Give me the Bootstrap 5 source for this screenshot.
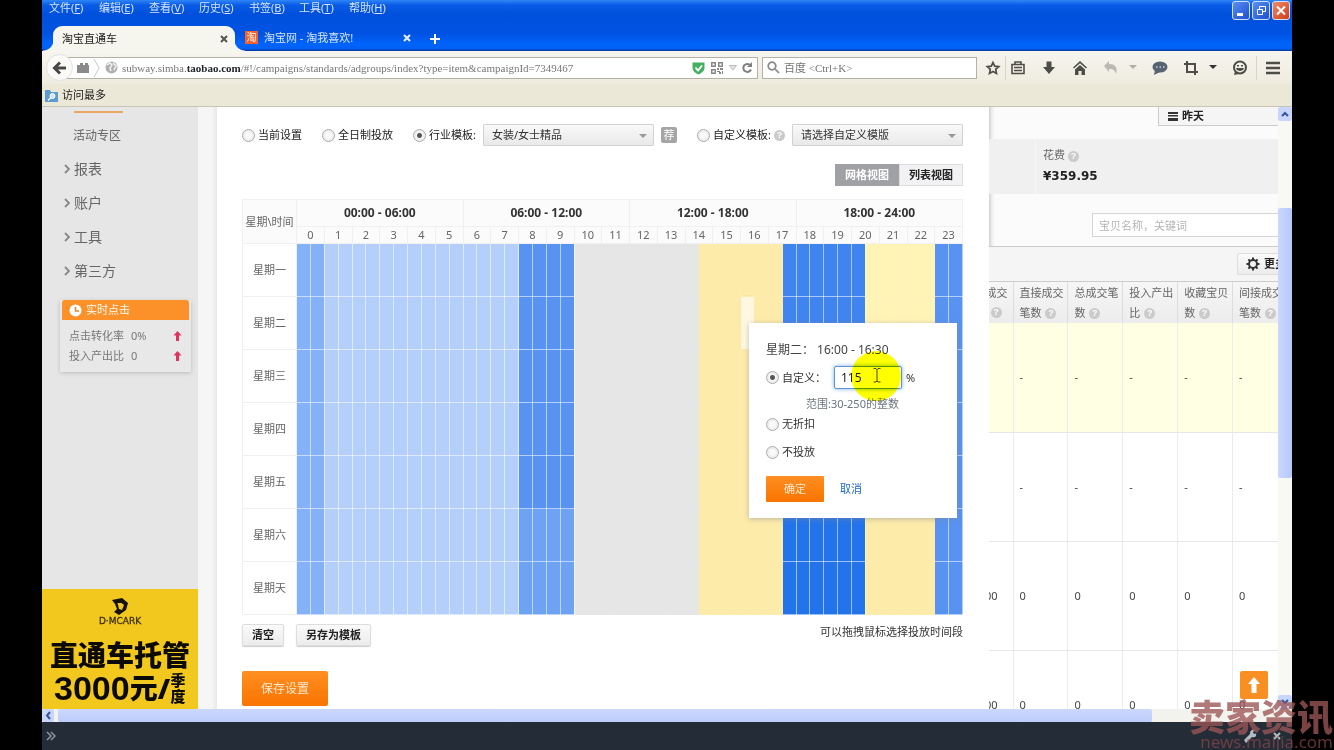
<!DOCTYPE html>
<html lang="zh-CN">
<head>
<meta charset="utf-8">
<meta name="viewport" content="width=device-width, initial-scale=1">
<title>淘宝直通车</title>
<link href="https://cdn.jsdelivr.net/npm/bootstrap@5.3.0/dist/css/bootstrap.min.css" rel="stylesheet">
<style>
:root{--ui:"Noto Sans","Noto Sans CJK SC",sans-serif;--song:"Liberation Serif","Noto Sans CJK SC",serif}
body{background:#000;font-family:var(--ui);font-size:11px;line-height:16px;color:#333}
a{color:inherit;text-decoration:none}
button{font-family:inherit}
svg{display:block;flex:none}
.desktop{height:100vh;padding:0 42px;overflow:hidden}
/* title bar, menus and tabs */
.titlebar{background:linear-gradient(#2f86f8 0,#0a5ce6 5px,#0050dc 14px,#0053e2 34px,#0064fb 44px,#0060f4 49px,#003fb0 50px);height:51px}
.menurow{height:26px;padding-right:2px}
.menus a{width:50px;color:#d5e4fb;white-space:nowrap}
.menus{padding-left:7px}
.wbtn{width:18px;height:19px;border:1px solid #cfe0fa;border-radius:3px;padding:0;margin-top:1px;background:linear-gradient(135deg,#5b8ff0,#1c4fd0);color:#fff}
.wbtn.x{background:linear-gradient(135deg,#ec8b68,#d23c14)}
.tabs{height:25px;padding-left:11px}
.tab1{position:relative;width:182px;height:26px;background:#f6f5ee;border-radius:9px 9px 0 0;padding:0 5px 0 9px;color:#222}
.tab1::before,.tab1::after{content:"";position:absolute;bottom:0;width:10px;height:12px}
.tab1::before{left:-10px;background:radial-gradient(circle at 0 0,transparent 10px,#f6f5ee 11px)}
.tab1::after{right:-10px;background:radial-gradient(circle at 100% 0,transparent 10px,#f6f5ee 11px)}
.tab2{width:176px;margin-left:10px;padding-bottom:2px;color:#d5e4fb}
.favi{width:13px;height:13px;background:#f0642c;color:#fff;font-size:10px;line-height:13px;text-align:center;margin-right:6px}
.plain{border:0;background:none;padding:0}
/* toolbar */
.tools{height:33px;background:linear-gradient(#f6f5ee,#efecdf);padding:0 11px 0 4px}
.back{width:27px;height:27px;border-radius:50%;border:1px solid #bdbab0;background:#fbfaf6;z-index:1;margin-right:-13px}
.field{height:22px;border:1px solid #b4b2a8;background:#fff;color:#777}
.addr{padding-left:16px}
.field input{border:0;outline:0;background:none;min-width:0;padding:0;font:11px/16px var(--song);color:#777}
.urltext{font:11px/16px var(--song);color:#777;white-space:nowrap}
.find{width:215px;margin-right:8px}
.bm{height:23px;background:#ebe8d8;border-bottom:1px solid #c8c5b5;color:#222;padding-left:3px}
.g1{margin-left:10px}.g2{margin-left:15px}
.vsep{width:1px;height:24px;background:#d8d5c8}
/* left column */
.side{width:156px;background:#e6e6e6;flex:none}
.side-nav{padding:4px 0 0 22px;color:#666}
.side-nav .cur{width:49px;height:2px;background:#e8a763;margin:0 0 3px 10px}
.side-nav a{display:flex;align-items:center;gap:3px;height:34px;font-size:14px}
.side-nav a.sub{padding:3px 0 0 9px;font-size:12px;height:36px}
.live{margin:12px 7px 0 18px;box-shadow:0 1px 4px #bbb;background:#e8e8e8;padding:0 2px 6px;color:#777}
.live h2{font-size:11px;line-height:20px;height:20px;background:#fb9128;color:#ffe9d0;margin:0 0 6px;padding-left:7px;border-radius:3px 3px 0 0}
.live div{height:20px;padding:0 7px}
.live .lab{width:62px}
.ad{height:120px;background:#f2c71e;color:#0c0a05;padding-top:9px}
.ad .brand{font:9px/12px "DejaVu Sans",sans-serif;color:#3c3208;-webkit-text-stroke:.3px}
.ad .l1{font-size:28px;line-height:32px;font-weight:900;margin-top:12px}
.ad .l2{font-size:28px;line-height:34px;font-weight:900;height:34px;white-space:nowrap}
.ad .n{font-family:"Liberation Sans",sans-serif;font-size:34px;font-weight:bold}
.ad .q{font-size:15px;line-height:16px;width:16px;white-space:normal}
.gut{width:19px;flex:none;background:linear-gradient(90deg,#f6f6f6 70%,#e9e9e9)}
/* schedule panel */
.dlg{background:#fff;padding:17px 26px 0 25px;min-width:0}
.opts{height:22px;gap:20px;white-space:nowrap;color:#222}
.pair{gap:7px}
.opts label,.pop label{display:flex;align-items:center;gap:3px}
.rad{appearance:none;width:13px;height:13px;margin:0;flex:none;border:1px solid #aaa;border-radius:50%;background:#fafafa;box-shadow:inset 0 0 0 2px #eee}
.rad:checked{background:radial-gradient(#555 2px,#fafafa 3px)}
.sel{appearance:none;width:171px;height:22px;border:1px solid #d2d2d2;border-radius:1px;font-size:11px;line-height:16px;color:#333;padding:0 20px 0 8px;background:linear-gradient(225deg,transparent 3px,#999 3px) calc(100% - 11px) 9px/0 0 no-repeat,linear-gradient(#f9f9f9,#e9e9e9)}
.selbox{position:relative}
.selbox::after{content:"";position:absolute;right:7px;top:10px;border:4px solid transparent;border-top-color:#999;border-bottom:0;pointer-events:none}
.rec{width:16px;height:16px;background:#a5a5a5;color:#fff;border-radius:2px;text-align:center;font-size:11px}
.q8{display:inline-block;width:11px;height:11px;border-radius:50%;background:#cbcbcb;color:#fff;font:bold 9px/11px "Liberation Sans",sans-serif;text-align:center;vertical-align:middle}
.views{margin-top:18px}
.vb{height:22px;width:64px;border:1px solid #ddd;background:#f2f2f4;font-size:11px;font-weight:bold;color:#222;padding:0}
.vb.on{background:#a0a1a5;border-color:#a0a1a5;color:#fff}
.sched{position:relative;margin-top:13px}
.grid{width:100%;table-layout:fixed;border-collapse:collapse;text-align:center;color:#666}
.grid th{font-weight:normal;background:#fbfbfb;border:1px solid #f0f0f0;padding:0;white-space:nowrap}
.grid thead .big{font-size:12px;font-weight:bold;color:#333;height:27px}
.grid thead .hr{height:17px;line-height:16px}
.grid tbody th{background:#fff}
.grid tbody tr{height:53px}
.grid td{padding:0;border:1px solid #ffffff8c}
.c0{background:#85b1f9}.c1{background:#b4cffa}.c2{background:#5893f1}.c3{background:#6ea3f4}
.grid .cg{background:#e6e6e6;border-color:#e7e7e7}.grid .cy{background:#fdebaa;border-color:#fdecae}.grid .cl{background:#fff4b6;border-color:#fff5bb}
.c5{background:#4084ef}.c6{background:#2374eb}.grid .pick{background:#fff7df;box-shadow:0 0 2px #caa}
.pop{position:absolute;top:124px;right:6px;width:208px;height:195px;background:#fff;box-shadow:0 1px 5px #8888;padding:19px 17px;color:#333}
.pop .tm{font-size:12px;color:#444}
.amt{width:68px;height:23px;border:1px solid #5c93d0;border-radius:2px;box-shadow:0 0 4px #7db2ef;padding:0 6px;font-size:12px;color:#222;outline:0}
.note{margin:7px 0 4px 40px}
.spot{position:absolute;left:102px;top:28px;width:50px;height:50px;border-radius:50%;background:#ff0;mix-blend-mode:multiply;pointer-events:none}
.beam{position:absolute;left:124px;top:45px}
.go{border:0;border-radius:1px;background:linear-gradient(#ff8f22,#f97400);color:#ffe9d0;font-size:11px;width:58px;height:26px;padding:0}
.save{width:86px;height:35px;font-size:12px;border-radius:2px;margin-top:25px}
.under{margin-top:9px;gap:12px}
.gb{height:22px;border:1px solid #ddd;border-radius:2px;background:linear-gradient(#fafafa,#ececec);font-size:11px;font-weight:bold;color:#222;padding:0 9px;box-shadow:0 1px 1px #ccc}
/* report behind */
.rep{position:relative;width:289px;flex:none;background:#fbfbfb;overflow:hidden;box-shadow:inset 5px 0 5px -4px #bbb;white-space:nowrap;color:#666}
.day{width:140px;height:19px;margin-left:169px;border:1px solid #ccc;border-top:0;background:#f5f5f5;font-size:11px;font-weight:bold;color:#222;text-align:left;padding:0 9px}
.stat{margin-top:13px;height:55px;background:#f0f0f0}
.stat .a{width:47px;border-right:1px solid #f7f7f7}
.stat .b{padding:8px 0 0 7px}
.cost{font:bold 12px/20px "DejaVu Sans",sans-serif;color:#222;margin-top:3px}
.kw{display:block;margin:19px 0 9px 103px;width:220px;height:24px;border:1px solid #d5d5d5;background:#fff;padding:0 6px;font-size:11px}
.kw::placeholder{color:#b5b5b5}
.bar{height:36px;background:#f5f5f5;border-top:1px solid #ccc;border-bottom:1px solid #ccc;padding:6px 0 0 248px}
.bar .gb{width:80px;text-align:left;box-shadow:none;padding:0 8px}
.rt{width:299px;table-layout:fixed;border-collapse:collapse}
.rt th{font-weight:normal;height:41px;line-height:20px;padding:0 0 0 6px;background:linear-gradient(#f6f6f6,#ececec);border-right:1px solid #ddd}
.rt th:first-child,.rt td:first-child{padding:0 5px 0 0;overflow:hidden}
.rt th:first-child div,.rt td:first-child div{display:flex;justify-content:flex-end;overflow:hidden}
.rt td{height:109px;padding:0 0 0 6px;border-right:1px solid #ececec;border-bottom:1px solid #e6e6e6;background:#fff;color:#444}
.rt td:first-child{padding-right:15px}
.rt .q8{margin:0 1px}
.rt th:first-child .q8{margin:4px 6px 5px 0}
.rt .hl td{background:#ffffe4}
.top{position:absolute;right:10px;bottom:10px;width:28px;height:28px;background:#f98f22;border-radius:2px}
.sv{width:14px;flex:none;background:#f8f8f5}
.sb{background:#c8d6fb;border-radius:2px;color:#34549c}
.thumbv{margin-top:87px;height:270px;background:linear-gradient(90deg,#cbd8fe,#b6c8fa)}
.sh{height:13px;background:#f3f3ee}
.thumbh{width:87.5%;background:linear-gradient(#cbd8fe,#bccdfb)}
.dock{height:28px;background:#232c37;padding:0 10px 0 4px;color:#8f979f}
.wm{position:absolute;right:1px;bottom:0;text-align:right;color:#9c5555c8}
.wm b{display:block;font-size:36px;line-height:30px;font-weight:900}
.wm span{display:block;font:17px/17px "Noto Sans",sans-serif;color:#8f4747b0}
</style>
</head>
<body>
<div class="desktop d-flex flex-column">
 <header class="titlebar flex-shrink-0">
  <div class="menurow d-flex justify-content-between">
   <nav class="menus d-flex"><a href="#">文件(<u>F</u>)</a><a href="#">编辑(<u>E</u>)</a><a href="#">查看(<u>V</u>)</a><a href="#">历史(<u>S</u>)</a><a href="#">书签(<u>B</u>)</a><a href="#">工具(<u>T</u>)</a><a href="#">帮助(<u>H</u>)</a></nav>
   <div class="d-flex align-items-start" style="gap:2px">
    <button class="wbtn" aria-label="最小化"><svg width="16" height="17"><path d="M4 12.500h6" stroke="#fff" stroke-width="3"/></svg></button>
    <button class="wbtn" aria-label="还原"><svg width="16" height="17" fill="none" stroke="#fff"><path d="M6.500 7V4.500h6v5H10M4.500 7.500h5v5h-5z"/></svg></button>
    <button class="wbtn x" aria-label="关闭"><svg width="16" height="17" stroke="#fff" stroke-width="2"><path d="M4 4.500l8 8M12 4.500l-8 8"/></svg></button>
   </div>
  </div>
  <div class="tabs d-flex align-items-center">
   <div class="tab1 d-flex align-items-center justify-content-between"><span>淘宝直通车</span><button class="plain" aria-label="关闭标签"><svg width="12" height="10" stroke="#555" stroke-width="2"><path d="M3 2l6 6M9 2l-6 6"/></svg></button></div>
   <div class="tab2 d-flex align-items-center"><span class="favi">淘</span><span>淘宝网 - 淘我喜欢!</span><button class="plain ms-auto me-2" aria-label="关闭标签"><svg width="12" height="10" stroke="#e8f0fd" stroke-width="2"><path d="M3 2l6 6M9 2l-6 6"/></svg></button></div>
   <button class="plain ms-2" aria-label="新建标签"><svg width="12" height="12" stroke="#fff" stroke-width="2"><path d="M6 1v10M1 6h10"/></svg></button>
  </div>
 </header>
 <div class="tools d-flex align-items-center flex-shrink-0">
  <button class="back plain border d-flex align-items-center justify-content-center" aria-label="后退"><svg width="15" height="14" fill="none" stroke="#484848" stroke-width="3"><path d="M8 1.500L2.500 7 8 12.500M3 7h11"/></svg></button>
  <div class="field addr d-flex align-items-center flex-grow-1 me-1">
   <svg width="24" height="18"><path d="M0 6h3V4h3v2h2V4h3v2h1v8H0z" fill="#8a8a8a"/><path d="M17 0l5 9-5 9" fill="none" stroke="#c8c8c8"/></svg>
   <svg class="ms-1" width="13" height="13"><circle cx="6.500" cy="6.500" r="6" fill="#b0b0b0"/><path d="M2 4l3-2 2 2-2 3 1 3M8 2l3 3-2 4" stroke="#f3f3f3" stroke-width="1.500" fill="none"/></svg>
   <span class="urltext flex-grow-1 ms-1">subway.simba.<b class="text-dark">taobao.com</b>/#!/campaigns/standards/adgroups/index?type=item&amp;campaignId=7349467</span>
   <svg width="13" height="14"><path d="M.5 1.500h12V7c0 3-3 5-6 6.500C3 12 .5 10 .5 7z" fill="#45b060"/><path d="M3.500 6.500l2.500 3 4-5" stroke="#fff" stroke-width="1.800" fill="none"/></svg>
   <svg style="margin-left:6px" width="12" height="12" fill="#888"><path d="M0 0h5v5H0zm1.500 1.500v2h2v-2zM7 0h5v5H7zm1.500 1.500v2h2v-2zM0 7h5v5H0zm1.500 1.500v2h2v-2zM6 6h2v2H6zM9 6h3v2H9zM6 9h3v1H6zM8 10h2v2H8zM11 9h1v3h-1z" fill-rule="evenodd"/></svg>
   <svg style="margin-left:6px" width="8" height="6"><path d="M.5.5h7L4 5z" fill="#e4e4e4" stroke="#bbb"/></svg>
   <svg class="ms-1 me-1" width="12" height="12" fill="none" stroke="#808080" stroke-width="2"><path d="M9.500 3.500A4 4 0 1 0 10 7.500"/><path d="M11 0v5H6z" fill="#808080" stroke="none"/></svg>
  </div>
  <div class="field find d-flex align-items-center">
   <svg class="mx-1" width="13" height="13" fill="none" stroke="#888" stroke-width="1.700"><circle cx="5" cy="5" r="3.800"/><path d="M8 8l4 4"/></svg>
   <input class="flex-grow-1" aria-label="搜索" placeholder="百度 &lt;Ctrl+K&gt;">
  </div>
  <svg width="16" height="16" fill="none" stroke="#4e4e48" stroke-width="1.700"><path d="M8 2.500l1.700 3.700 4 .5-3 2.700.8 4L8 11.500l-3.500 1.900.8-4-3-2.700 4-.5z"/></svg>
  <span class="vsep ms-1"></span>
  <svg class="ms-1" width="16" height="16" fill="none" stroke="#4e4e48" stroke-width="1.600"><path d="M2 4.500h12v9H2zM5 4V2h6v2M4 7.500h8M4 10.500h8"/></svg>
  <svg class="g2" width="16" height="16" fill="#4e4e48"><path d="M5.500 1.500h5V7H14l-6 7-6-7h3.500z"/></svg>
  <svg class="g2" width="16" height="16" fill="#4e4e48"><path d="M8 1l7 6.500-1 1L8 3.200 2 8.500l-1-1zM8 5l5 4.500V15H9.500v-4h-3v4H3V9.500z"/></svg>
  <svg class="g2" width="16" height="16"><path d="M1 6l5-5v3c6 0 9 3 7 10-1-4-3-5-7-5v3z" fill="#b9b9b2"/></svg>
  <svg class="g1" width="8" height="5"><path d="M0 0h8L4 4z" fill="#b0b0a8"/></svg>
  <svg class="g2" width="16" height="16"><ellipse cx="8" cy="7" rx="7.500" ry="5.500" fill="#566470"/><path d="M3 10l-1 5 6-3z" fill="#566470"/><path d="M4 7h1.500M7.500 7H9M11 7h1.500" stroke="#ccd" stroke-width="1.500"/></svg>
  <svg class="g2" width="16" height="16" fill="none" stroke="#4e4e48" stroke-width="2"><path d="M4 1v11h11M1 4h11v11"/></svg>
  <svg class="g1" width="8" height="5"><path d="M0 0h8L4 4z" fill="#333"/></svg>
  <svg class="g2" width="16" height="16"><circle cx="8" cy="7.500" r="6" fill="none" stroke="#4e4e48" stroke-width="2"/><path d="M3 11l-1 4 5-1zM4 8h8c-.5 4-7.500 4-8 0zM5 5h2v1.500H5zM9 5h2v1.500H9z" fill="#4e4e48"/></svg>
  <span class="vsep ms-2 me-2"></span>
  <svg width="16" height="14" stroke="#4e4e48" stroke-width="2.500"><path d="M1 2h14M1 7h14M1 12h14"/></svg>
 </div>
 <div class="bm d-flex align-items-center flex-shrink-0"><svg width="13" height="13"><path d="M0 1h5l1 2h7v10H0z" fill="#5b9bd0"/><circle cx="7.500" cy="7" r="2.500" fill="#cfe6f7" stroke="#fff"/><path d="M5.500 9L3 11.500" stroke="#fff" stroke-width="1.500"/></svg><a class="ms-1" href="#">访问最多</a></div>

 <main class="d-flex flex-grow-1 overflow-hidden">
  <aside class="side d-flex flex-column">
   <nav class="side-nav">
    <div class="cur"></div>
    <a class="sub" href="#">活动专区</a>
    <a href="#"><svg width="7" height="10" fill="none" stroke="#888" stroke-width="1.800"><path d="M1 1l4 4-4 4"/></svg>报表</a>
    <a href="#"><svg width="7" height="10" fill="none" stroke="#888" stroke-width="1.800"><path d="M1 1l4 4-4 4"/></svg>账户</a>
    <a href="#"><svg width="7" height="10" fill="none" stroke="#888" stroke-width="1.800"><path d="M1 1l4 4-4 4"/></svg>工具</a>
    <a href="#"><svg width="7" height="10" fill="none" stroke="#888" stroke-width="1.800"><path d="M1 1l4 4-4 4"/></svg>第三方</a>
   </nav>
   <section class="live">
    <h2 class="d-flex align-items-center gap-1"><svg width="13" height="13"><circle cx="6.500" cy="6.500" r="6" fill="#fff"/><path d="M6.500 3v4H10" fill="none" stroke="#e8862a" stroke-width="1.500"/></svg>实时点击</h2>
    <div class="d-flex align-items-center"><span class="lab">点击转化率</span><span>0%</span><svg class="ms-auto" width="9" height="10" fill="#e0335c"><path d="M4.500 0L8.500 4.500H6V10H3V4.500H.5z"/></svg></div>
    <div class="d-flex align-items-center"><span class="lab">投入产出比</span><span>0</span><svg class="ms-auto" width="9" height="10" fill="#e0335c"><path d="M4.500 0L8.500 4.500H6V10H3V4.500H.5z"/></svg></div>
   </section>
   <section class="ad mt-auto text-center">
    <svg class="mx-auto" width="18" height="17"><path d="M1 2l10-2 6 5-2 7-7 5-5-3 3-3-2-5zM6.500 5l1.500 6 3 1 2-5-2.500-2z" fill="#15120a" fill-rule="evenodd"/></svg>
    <div class="brand">D·MCARK</div>
    <div class="l1">直通车托管</div>
    <div class="l2 d-flex align-items-center justify-content-center"><span class="n">3000</span><span>元/</span><span class="q">季度</span></div>
   </section>
  </aside>
  <div class="gut"></div>

  <section class="dlg flex-grow-1">
   <div class="opts d-flex align-items-center">
    <label><input class="rad" type="radio" name="tpl">当前设置</label>
    <label><input class="rad" type="radio" name="tpl">全日制投放</label>
    <div class="pair d-flex align-items-center">
     <label><input class="rad" type="radio" name="tpl" checked>行业模板:</label>
     <span class="selbox"><select class="sel" aria-label="行业模板"><option>女装/女士精品</option></select></span>
     <span class="rec">荐</span>
    </div>
    <div class="pair d-flex align-items-center ms-auto">
     <label><input class="rad" type="radio" name="tpl">自定义模板: <span class="q8">?</span></label>
     <span class="selbox"><select class="sel" aria-label="自定义模板"><option>请选择自定义模版</option></select></span>
    </div>
   </div>
   <div class="views d-flex justify-content-end"><button class="vb on">网格视图</button><button class="vb">列表视图</button></div>
   <div class="sched">
    <table class="grid">
     <colgroup id="cols"><col style="width:54px"></colgroup>
     <thead><tr><th rowspan="2">星期\时间</th><th class="big" colspan="12">00:00 - 06:00</th><th class="big" colspan="12">06:00 - 12:00</th><th class="big" colspan="12">12:00 - 18:00</th><th class="big" colspan="12">18:00 - 24:00</th></tr><tr id="hours"></tr></thead>
     <tbody id="days"></tbody>
    </table>
    <form class="pop" onsubmit="return false">
     <div class="tm">星期二： 16:00 - 16:30</div>
     <div class="d-flex align-items-center mt-2"><label><input class="rad" type="radio" name="disc" checked>自定义：</label><input class="amt ms-2" value="115" aria-label="折扣"><span class="ms-1">%</span></div>
     <div class="note text-secondary">范围:30-250的整数</div>
     <label><input class="rad" type="radio" name="disc">无折扣</label>
     <label style="margin-top:12px"><input class="rad" type="radio" name="disc">不投放</label>
     <div class="d-flex align-items-center gap-3 mt-3"><button class="go">确定</button><a href="#" style="color:#1a66c8">取消</a></div>
     <span class="spot"></span>
     <svg class="beam" width="8" height="15" fill="none" stroke="#443"><path d="M.5.500H3l1 1 1-1h2.500M4 1v12M.5 14H3l1-1 1 1h2.500"/></svg>
    </form>
   </div>
   <div class="under d-flex align-items-start"><button class="gb">清空</button><button class="gb">另存为模板</button><span class="ms-auto">可以拖拽鼠标选择投放时间段</span></div>
   <button class="go save">保存设置</button>
  </section>

  <section class="rep">
   <button class="day d-flex align-items-center gap-1"><svg width="10" height="9" fill="#333"><path d="M0 0h10v2H0zM0 3h10v1.500H0zM0 6h10v3H0z"/></svg>昨天</button>
   <div class="stat d-flex"><div class="a"></div><div class="b"><div>花费 <span class="q8">?</span></div><div class="cost">¥359.95</div></div></div>
   <input class="kw" placeholder="宝贝名称，关键词" aria-label="宝贝名称，关键词">
   <div class="bar"><button class="gb d-flex align-items-center gap-1"><svg width="14" height="14"><circle cx="7" cy="7" r="4" fill="none" stroke="#333" stroke-width="2"/><g stroke="#333" stroke-width="2"><path d="M7 .5v2.500M7 11v2.500M.5 7H3M11 7h2.500M2.400 2.400l1.800 1.800M9.800 9.800l1.800 1.800M11.600 2.400L9.800 4.200M4.200 9.800l-1.800 1.800"/></g></svg>更多</button></div>
   <table class="rt">
    <colgroup><col style="width:24px"><col span="5"></colgroup>
    <thead><tr><th><div>成交</div><div><span class="q8">?</span></div></th><th>直接成交<br>笔数 <span class="q8">?</span></th><th>总成交笔<br>数 <span class="q8">?</span></th><th>投入产出<br>比 <span class="q8">?</span></th><th>收藏宝贝<br>数 <span class="q8">?</span></th><th>间接成交<br>笔数 <span class="q8">?</span></th></tr></thead>
    <tbody>
     <tr class="hl"><td></td><td>-</td><td>-</td><td>-</td><td>-</td><td>-</td></tr>
     <tr><td></td><td>-</td><td>-</td><td>-</td><td>-</td><td>-</td></tr>
     <tr><td><div>00</div></td><td>0</td><td>0</td><td>0</td><td>0</td><td>0</td></tr>
     <tr><td><div>00</div></td><td>0</td><td>0</td><td>0</td><td>0</td><td>0</td></tr>
    </tbody>
   </table>
   <a class="top" href="#" aria-label="返回顶部"><svg width="28" height="28"><path d="M14 6l6 7h-3.500v9h-5v-9H8z" fill="#fff"/></svg></a>
  </section>
  <div class="sv d-flex flex-column">
   <div class="sb"><svg width="14" height="14" fill="none" stroke="#34549c" stroke-width="2"><path d="M4 9l3-3 3 3"/></svg></div>
   <div class="sb thumbv"></div>
   <div class="sb mt-auto"><svg width="14" height="14" fill="none" stroke="#34549c" stroke-width="2"><path d="M4 5l3 3 3-3"/></svg></div>
  </div>
 </main>
 <div class="sh d-flex flex-shrink-0 gap-1"><div class="sb"><svg width="12" height="13" fill="none" stroke="#34549c" stroke-width="2"><path d="M8 3L5 6.500 8 10"/></svg></div><div class="sb thumbh"></div></div>
 <footer class="dock d-flex align-items-center flex-shrink-0"><svg width="10" height="10" fill="none" stroke="#8f979f" stroke-width="1.500"><path d="M1 1l4 4-4 4M5 1l4 4-4 4"/></svg>
  <svg class="ms-auto me-3" width="14" height="14"><path d="M1 11l6-6c-.5-3 2-5 5-4L10 3l1 2 2-.5C14 7 12 9 9 8l-6 6z" fill="#b5bbc2"/></svg>
  <svg width="9" height="9" stroke="#b5bbc2" stroke-width="2"><path d="M1 1l6 6M7 1L1 7"/></svg>
 </footer>
</div>
<div class="wm"><b>卖家资讯</b><span>news.maijia.com</span></div>
<script src="https://cdn.jsdelivr.net/npm/bootstrap@5.3.0/dist/js/bootstrap.bundle.min.js"></script>
<script>
// Discount bands by half hour: [end index, class on weekdays, class at the weekend]
const bands=[[2,'c0','c0'],[16,'c1','c1'],[20,'c2','c3'],[29,'cg','cg'],[35,'cy','cy'],[41,'c5','c6'],[46,'cl','cy'],[48,'c2','c2']];
let cols='',hours='',days='';
for(let i=0;i<48;i++)cols+='<col>';
for(let h=0;h<24;h++)hours+=`<th class="hr" colspan="2">${h}</th>`;
['一','二','三','四','五','六','天'].forEach((d,r)=>{
 days+=`<tr><th>星期${d}</th>`;
 for(let i=0;i<48;i++){const b=bands.find(x=>i<x[0]);days+=`<td class="${b[r>4?2:1]}${r===1&&i===32?' pick':''}"></td>`;}
 days+='</tr>';
});
document.getElementById('cols').insertAdjacentHTML('beforeend',cols);
document.getElementById('hours').innerHTML=hours;
document.getElementById('days').innerHTML=days;
</script>
</body>
</html>
